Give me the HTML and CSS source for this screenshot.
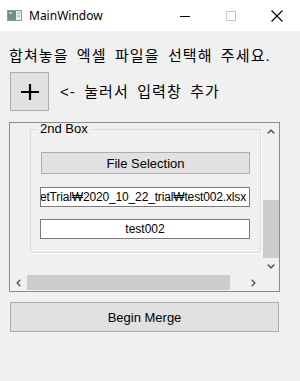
FILE: index.html
```html
<!DOCTYPE html>
<html lang="ko">
<head>
    <meta charset="UTF-8">
    <meta name="viewport" content="width=device-width, initial-scale=1.0">
    <title>MainWindow</title>
    <link rel="stylesheet" href="styles.css">
</head>
<body>
    <div class="window">
        <!-- Barre de titre -->
        <header class="titlebar">
            <svg class="app-icon" width="15" height="11" viewBox="0 0 15 11">
                <rect x="0.5" y="0.5" width="14" height="10" fill="#e8eeee" stroke="#8e9c9c"/>
                <rect x="1" y="1" width="8" height="9" fill="#6f8f8f"/>
                <rect x="2" y="2" width="3" height="2" fill="#b9cccc"/>
                <line x1="10" y1="3" x2="13" y2="3" stroke="#9aa8a8"/>
                <line x1="10" y1="6" x2="13" y2="6" stroke="#9aa8a8"/>
            </svg>
            <span class="title">MainWindow</span>
            <div class="controls">
                <span class="ctrl">
                    <svg width="12" height="12" viewBox="0 0 12 12"><line x1="1" y1="6.5" x2="11" y2="6.5" stroke="#000"/></svg>
                </span>
                <span class="ctrl">
                    <svg width="12" height="12" viewBox="0 0 12 12"><rect x="1.5" y="1.5" width="9" height="9" fill="none" stroke="#c6c6c6"/></svg>
                </span>
                <span class="ctrl">
                    <svg width="12" height="12" viewBox="0 0 12 12"><path d="M0.5 0.5 L11.5 11.5 M11.5 0.5 L0.5 11.5" stroke="#000" stroke-width="1.1"/></svg>
                </span>
            </div>
        </header>

        <main class="client">
            <p class="hint">합쳐놓을 엑셀 파일을 선택해 주세요.</p>

            <div class="add-row">
                <button class="add-btn">
                    <svg width="18" height="18" viewBox="0 0 18 18">
                        <path d="M0 9 H18 M9 1 V17" stroke="#000" stroke-width="2.2"/>
                    </svg>
                </button>
                <span class="add-text">&lt;- 눌러서 입력창 추가</span>
            </div>

            <!-- Zone défilante avec les boîtes -->
            <div class="scroll-area">
                <div class="viewport">
                    <fieldset class="group">
                        <legend>2nd Box</legend>
                        <button class="file-btn">File Selection</button>
                        <div class="line-edit path">etTrial₩2020_10_22_trial₩test002.xlsx</div>
                        <div class="line-edit name">test002</div>
                    </fieldset>
                </div>

                <div class="vbar">
                    <span class="arrow">
                        <svg width="8" height="5" viewBox="0 0 8 5"><path d="M0.7 4.3 L4 1.2 L7.3 4.3" fill="none" stroke="#606060" stroke-width="1.6"/></svg>
                    </span>
                    <div class="track">
                        <div class="thumb"></div>
                    </div>
                    <span class="arrow">
                        <svg width="8" height="5" viewBox="0 0 8 5"><path d="M0.7 0.7 L4 3.8 L7.3 0.7" fill="none" stroke="#606060" stroke-width="1.6"/></svg>
                    </span>
                </div>

                <div class="hbar">
                    <span class="arrow">
                        <svg width="5" height="8" viewBox="0 0 5 8"><path d="M4.3 0.7 L1.2 4 L4.3 7.3" fill="none" stroke="#606060" stroke-width="1.6"/></svg>
                    </span>
                    <div class="track">
                        <div class="thumb"></div>
                    </div>
                    <span class="arrow">
                        <svg width="5" height="8" viewBox="0 0 5 8"><path d="M0.7 0.7 L3.8 4 L0.7 7.3" fill="none" stroke="#606060" stroke-width="1.6"/></svg>
                    </span>
                </div>

                <div class="corner"></div>
            </div>

            <button class="merge-btn">Begin Merge</button>
        </main>
    </div>
</body>
</html>
```

FILE: styles.css
```css
/* Reset et variables */
:root {
    --color-bg: #f0f0f0;
    --color-btn: #e1e1e1;
    --color-btn-border: #adadad;
    --color-thumb: #cdcdcd;
    --font-ui: "Liberation Sans", "Noto Sans CJK KR", sans-serif;
}

* {
    margin: 0;
    padding: 0;
    box-sizing: border-box;
}

body {
    width: 300px;
    height: 381px;
    overflow: hidden;
    background: var(--color-bg);
    font-family: var(--font-ui);
    color: #000;
}

.window {
    display: flex;
    flex-direction: column;
    height: 100%;
}

/* Barre de titre */
.titlebar {
    height: 31px;
    background: #fff;
    display: flex;
    align-items: center;
    padding-left: 7px;
}

.app-icon {
    margin-top: -1px;
}

.title {
    margin-left: 7px;
    font-family: "Noto Sans", sans-serif;
    font-size: 12px;
    margin-top: -1px;
}

.controls {
    margin-left: auto;
    display: flex;
    height: 100%;
}

.ctrl {
    width: 46px;
    display: flex;
    align-items: center;
    justify-content: center;
}

/* Contenu */
.client {
    flex: 1;
    padding: 15px 0 0 9px;
    display: flex;
    flex-direction: column;
    align-items: flex-start;
}

.hint {
    font-size: 15px;
    line-height: 20px;
    letter-spacing: 1.1px;
    word-spacing: 3px;
    white-space: nowrap;
}

.add-row {
    margin-top: 6px;
    display: flex;
    align-items: center;
    gap: 11px;
}

.add-btn {
    width: 39px;
    height: 39px;
    margin-left: 1px;
    background: var(--color-btn);
    border: 1px solid var(--color-btn-border);
    display: flex;
    align-items: center;
    justify-content: center;
}

.add-text {
    font-size: 15px;
    line-height: 20px;
    letter-spacing: 1.1px;
    word-spacing: 3px;
    white-space: nowrap;
}

/* Zone défilante */
.scroll-area {
    margin-top: 11px;
    width: 271px;
    height: 170px;
    border: 1px solid #8c8c8c;
    display: grid;
    grid-template-columns: 1fr 17px;
    grid-template-rows: 1fr 16px;
}

.viewport {
    padding-left: 20px;
}

.group {
    width: 231px;
    margin: 0;
    min-width: 0;
    border: 1px solid #dcdcdc;
    box-shadow: 1px 1px 0 #fff;
    padding: 17px 10px 13px 9px;
    display: flex;
    flex-direction: column;
}

.group legend {
    font-size: 13px;
    line-height: 12px;
    padding: 0 2px;
    margin-left: -2px;
}

.file-btn {
    width: 209px;
    height: 22px;
    margin-left: 1px;
    background: var(--color-btn);
    border: 1px solid var(--color-btn-border);
    font-family: var(--font-ui);
    font-size: 13px;
    color: #000;
}

.line-edit {
    height: 20px;
    background: #fff;
    border: 1px solid #7a7a7a;
    font-size: 12px;
    line-height: 18px;
    white-space: nowrap;
    overflow: hidden;
    display: flex;
}

.line-edit.path {
    margin-top: 13px;
    justify-content: flex-end;
    padding-right: 3px;
    font-size: 12px;
    letter-spacing: -0.15px;
}

.line-edit.name {
    margin-top: 12px;
    justify-content: center;
}

/* Barres de défilement */
.vbar {
    display: flex;
    flex-direction: column;
    padding-left: 1px;
}

.vbar .arrow {
    height: 17px;
    display: flex;
    align-items: center;
    justify-content: center;
}

.vbar .track {
    flex: 1;
    display: flex;
    flex-direction: column;
    justify-content: flex-end;
}

.vbar .thumb {
    height: 58px;
    background: var(--color-thumb);
}

.hbar {
    display: flex;
}

.hbar .arrow {
    width: 17px;
    display: flex;
    align-items: center;
    justify-content: center;
}

.hbar .track {
    flex: 1;
    display: flex;
}

.hbar .thumb {
    width: 203px;
    height: 15px;
    background: var(--color-thumb);
}

.corner {
    background: var(--color-bg);
}

.merge-btn {
    margin-top: 10px;
    margin-left: 1px;
    width: 269px;
    height: 30px;
    background: var(--color-btn);
    border: 1px solid var(--color-btn-border);
    font-family: var(--font-ui);
    font-size: 13px;
    color: #000;
}
```
